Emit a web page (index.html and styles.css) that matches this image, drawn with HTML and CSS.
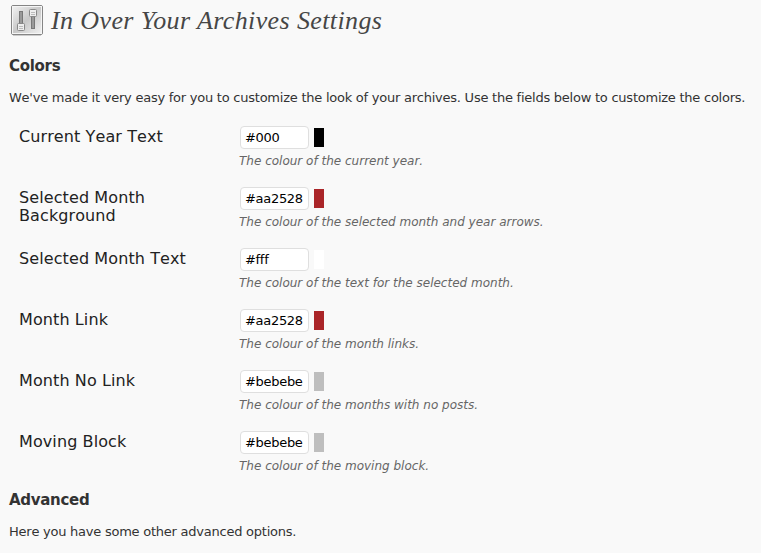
FILE: index.html
```html
<!DOCTYPE html>
<html lang="en"><head><meta charset="utf-8"><title>In Over Your Archives Settings</title><link rel="stylesheet" href="styles.css"></head>
<body>
<header class="head">
<svg class="icon" width="34" height="34" viewBox="0 0 34 34"><defs><linearGradient id="panel" x2="1" y2="1"><stop stop-color="#f4f4f4"/><stop offset=".5" stop-color="#c8c8c8"/><stop offset="1" stop-color="#f4f4f4"/></linearGradient></defs><rect x="1.500" y="1.500" width="31" height="29" rx="1.500" fill="url(#panel)" stroke="#858585"/><rect x="2.500" y="2.500" width="29" height="27" fill="none" stroke="#f5f5f5"/><path d="M3 31.500h28" stroke="#ccc"/><rect x="9.500" y="7.500" width="3" height="16" fill="#999" stroke="#777"/><rect x="21.500" y="9.500" width="3" height="15" fill="#999" stroke="#777"/><rect x="7.500" y="19.500" width="7" height="7" rx="1" fill="#eee" stroke="#888"/><rect x="19.500" y="5.500" width="7" height="7" rx="1" fill="#eee" stroke="#888"/><path d="M9 22.500h4M9 24.500h4M21 8.500h4M21 10.500h4" stroke="#bbb"/></svg>
<h1>In Over Your Archives Settings</h1></header>
<h2>Colors</h2>
<p>We've made it very easy for you to customize the look of your archives. Use the fields below to customize the colors.</p>
<div class="form">
<div class="row"><label>Current Year Text</label><div><div class="field"><input value="#000"><span class="swatch black"></span></div><em>The colour of the current year.</em></div></div>
<div class="row"><label>Selected Month Background</label><div><div class="field"><input value="#aa2528"><span class="swatch red"></span></div><em>The colour of the selected month and year arrows.</em></div></div>
<div class="row"><label>Selected Month Text</label><div><div class="field"><input value="#fff"><span class="swatch white"></span></div><em>The colour of the text for the selected month.</em></div></div>
<div class="row"><label>Month Link</label><div><div class="field"><input value="#aa2528"><span class="swatch red"></span></div><em>The colour of the month links.</em></div></div>
<div class="row"><label>Month No Link</label><div><div class="field"><input value="#bebebe"><span class="swatch gray"></span></div><em>The colour of the months with no posts.</em></div></div>
<div class="row"><label>Moving Block</label><div><div class="field"><input value="#bebebe"><span class="swatch gray"></span></div><em>The colour of the moving block.</em></div></div>
</div>
<h2>Advanced</h2>
<p>Here you have some other advanced options.</p>
</body></html>
```
FILE: styles.css
```css
* { box-sizing: border-box; }
body { margin: 0; padding: 4px 0 0 10px; height: 553px; overflow: hidden; background: #f9f9f9; color: #333; font: 13px/18px "DejaVu Sans", sans-serif; font-kerning: none; }
.head { display: flex; height: 52px; }
.icon { display: block; flex: none; }
h1 { margin: -1px 0 0 7px; font: italic 26px/36px "Liberation Serif", serif; letter-spacing: 0.39px; color: #464646; white-space: nowrap; }
h2 { margin: 0 0 0 -1px; font-size: 15px; line-height: 20px; letter-spacing: -0.3px; color: #333; }
p { margin: 13px 0 0 -1px; letter-spacing: -0.24px; white-space: nowrap; }
.form { padding: 18px 0 0 9px; }
.row { display: grid; grid-template-columns: 220px 1fr; height: 61px; }
.row:last-child { height: 60px; }
label { padding-top: 3px; width: 180px; font-size: 16px; line-height: 18px; letter-spacing: 0.1px; color: #222; }
.field { display: flex; align-items: center; height: 25px; }
input { margin: 0 5px 0 1px; padding: 3px 4px; width: 69px; height: 23px; border: 1px solid #dfdfdf; border-radius: 4px; background: #fff; color: #000; font: 13px "DejaVu Sans", sans-serif; letter-spacing: -0.3px; }
.swatch { width: 10px; height: 19px; }
.black { background: #000; }
.red { background: #aa2528; }
.white { background: #fff; }
.gray { background: #bebebe; }
em { display: block; margin-top: 2px; font-size: 12px; line-height: 18px; color: #666; white-space: nowrap; }
```
